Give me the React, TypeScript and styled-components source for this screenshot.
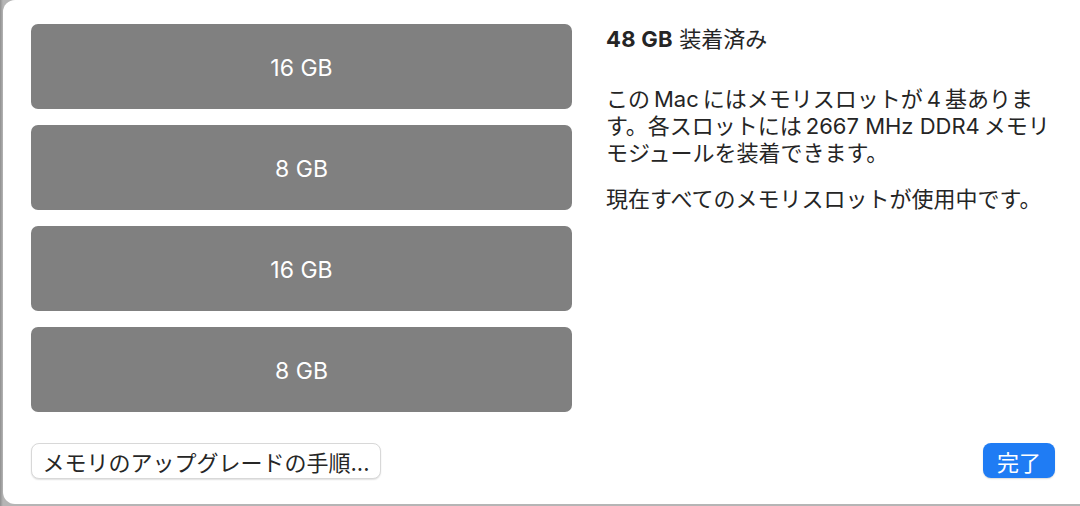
import React from "react";
import styled, { createGlobalStyle } from "styled-components";

const GlobalStyle = createGlobalStyle`
  html, body { margin: 0; padding: 0; }
  body {
    background: #9a9a9a;
    font-family: Inter, "Noto Sans CJK JP", "Noto Sans", sans-serif;
    -webkit-font-smoothing: antialiased;
  }
  #root { width: 1080px; height: 506px; overflow: hidden; }
`;

const Desktop = styled.div`
  width: 1080px;
  height: 506px;
  display: flex;
  align-items: flex-start;
  background: linear-gradient(90deg, #8f8f8f 0, #b5b5b5 3px);
`;

const Window = styled.div`
  margin-left: 3px;
  width: 1077px;
  height: 504px;
  box-sizing: border-box;
  background: #ffffff;
  border-bottom-left-radius: 12px;
  border-top-left-radius: 12px;
  padding: 24px 25px 25px 28px;
  display: flex;
  flex-direction: column;
  color: #252525;
`;

const Main = styled.div`
  display: flex;
  gap: 34px;
  flex: 1;
`;

const SlotList = styled.div`
  width: 541px;
  display: flex;
  flex-direction: column;
  gap: 16px;
`;

const Slot = styled.div`
  height: 85px;
  border-radius: 7px;
  background: #808080;
  color: #ffffff;
  font-size: 23px;
  display: flex;
  align-items: center;
  justify-content: center;
  padding-top: 2px;
  box-sizing: border-box;
`;

const Info = styled.div`
  flex: 1;
  display: flex;
  flex-direction: column;
  padding-top: 1px;
`;

const Title = styled.div`
  font-size: 22px;
  line-height: 28px;
  b { font-weight: 700; letter-spacing: 0.3px; }
`;

const Para = styled.p<{ $top: number }>`
  margin: ${(p) => p.$top}px 0 0;
  font-size: 22px;
  line-height: 27px;
  white-space: nowrap;
`;

const Footer = styled.div`
  display: flex;
  justify-content: space-between;
  align-items: center;
  margin-top: 31px;
`;

const GuideButton = styled.button`
  width: 350px;
  height: 36px;
  border-radius: 8px;
  border: 1px solid #d8d8d8;
  background: #ffffff;
  box-shadow: 0 1px 1.5px rgba(0, 0, 0, 0.12);
  font-family: inherit;
  font-size: 22px;
  color: #262626;
  padding: 0;
  display: flex;
  align-items: center;
  justify-content: center;
`;

const DoneButton = styled.button`
  width: 72px;
  height: 35px;
  border-radius: 8px;
  border: none;
  background: #1f7cf4;
  box-shadow: 0 1px 1.5px rgba(0, 0, 0, 0.15);
  color: #ffffff;
  font-family: inherit;
  font-size: 22px;
  padding: 0;
  margin-top: -1px;
`;

const slots = ["16 GB", "8 GB", "16 GB", "8 GB"];
const t = "\u2009";

export default function App() {
  return (
    <>
      <GlobalStyle />
      <Desktop>
        <Window>
          <Main>
            <SlotList>
              {slots.map((s, i) => (
                <Slot key={i}>{s}</Slot>
              ))}
            </SlotList>
            <Info>
              <Title>
                <b>48 GB</b> 装着済み
              </Title>
              <Para $top={33}>
                {`この${t}Mac${t}にはメモリスロットが${t}4${t}基ありま`}
                <br />
                {`す。各スロットには${t}2667 MHz DDR4${t}メモリ`}
                <br />
                モジュールを装着できます。
              </Para>
              <Para $top={19}>現在すべてのメモリスロットが使用中です。</Para>
            </Info>
          </Main>
          <Footer>
            <GuideButton>メモリのアップグレードの手順...</GuideButton>
            <DoneButton>完了</DoneButton>
          </Footer>
        </Window>
      </Desktop>
    </>
  );
}
